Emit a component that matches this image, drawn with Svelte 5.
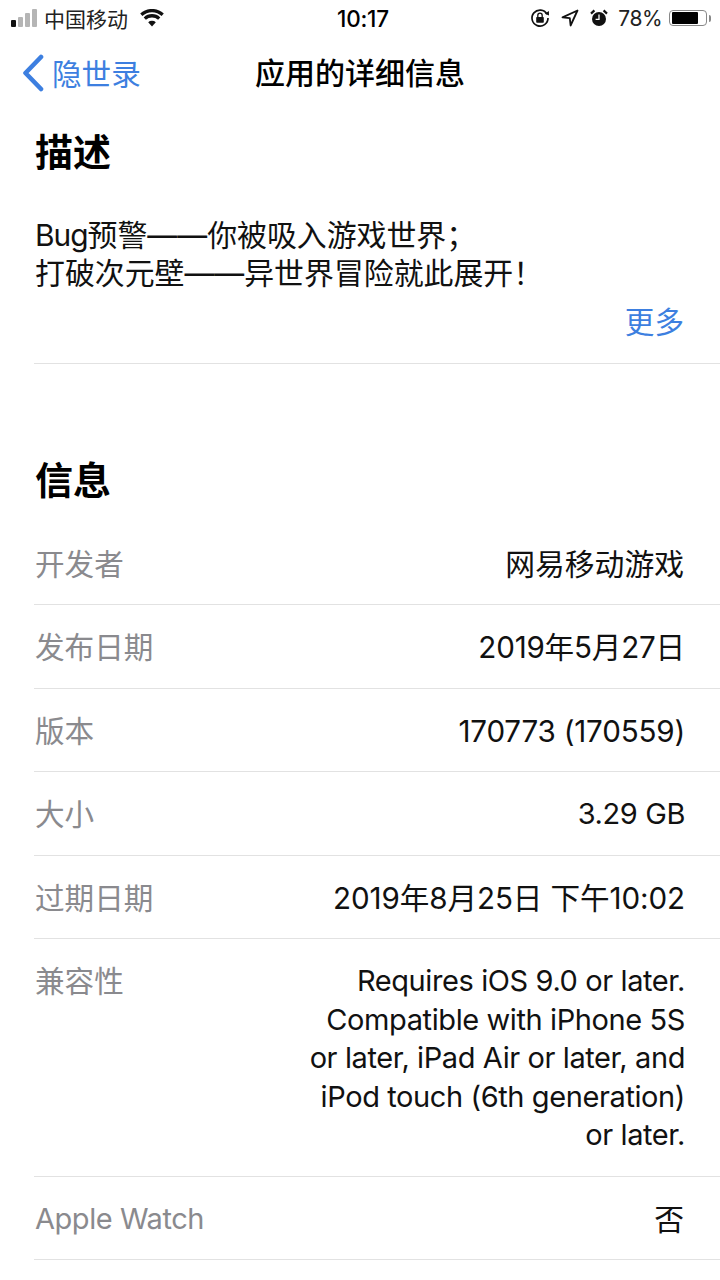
<script>
	// Rows of the info table; kind picks the tracking that suits the text
	const rows = [
		{ label: '开发者', value: ['网易移动游戏'], kind: 'cjk' },
		{ label: '发布日期', value: ['2019年5月27日'], kind: 'num' },
		{ label: '版本', value: ['170773 (170559)'], kind: 'num' },
		{ label: '大小', value: ['3.29 GB'], kind: 'text' },
		{ label: '过期日期', value: ['2019年8月25日 下午10:02'], kind: 'wide' },
		{
			label: '兼容性',
			value: [
				'Requires iOS 9.0 or later.',
				'Compatible with iPhone 5S',
				'or later, iPad Air or later, and',
				'iPod touch (6th generation)',
				'or later.'
			],
			kind: 'text'
		},
		{ label: 'Apple Watch', value: ['否'], kind: 'cjk', labelText: true }
	];
</script>

<div class="page">
	<header class="status">
		<div class="status-left">
			<div class="signal">
				<i class="on"></i><i></i><i></i><i></i>
			</div>
			<span class="carrier">中国移动</span>
			<svg class="wifi" viewBox="0 0 24 18" width="24" height="18">
				<path d="M12 17.5 L8.2 13.2 A5.6 5.6 0 0 1 15.8 13.2 Z" />
				<path d="M5.9 10.8 L3.7 8.4 A12 12 0 0 1 20.3 8.4 L18.1 10.8 A9 9 0 0 0 5.9 10.8 Z" />
				<path d="M2.4 7 L0.2 4.6 A17.2 17.2 0 0 1 23.8 4.6 L21.6 7 A14 14 0 0 0 2.4 7 Z" />
			</svg>
		</div>
		<span class="time">10:17</span>
		<div class="status-right">
			<svg class="lock" viewBox="0 0 20 20" width="20" height="20">
				<path d="M17 6.2 A8 8 0 1 0 18 10" fill="none" stroke="#111" stroke-width="1.7" />
				<path d="M14.8 5.8 L19 7.4 L18.9 3 Z" fill="#111" />
				<rect x="6.2" y="9" width="7.6" height="5.8" rx="0.8" fill="#111" />
				<path d="M7.8 9 V7.4 A2.2 2.2 0 0 1 12.2 7.4 V9" fill="none" stroke="#111" stroke-width="1.3" />
			</svg>
			<svg class="arrow" viewBox="0 0 18 18" width="18" height="18">
				<path d="M16.5 1.5 L1.5 8.4 L8.8 9.2 L9.6 16.5 Z" fill="none" stroke="#111" stroke-width="1.8" stroke-linejoin="round" />
			</svg>
			<svg class="alarm" viewBox="0 0 18 18" width="18" height="18">
				<circle cx="9" cy="10" r="7" fill="#111" />
				<path d="M1 4.6 L4.4 1.4 M17 4.6 L13.6 1.4" stroke="#111" stroke-width="2.2" />
				<path d="M9 5.6 V10.4 H5.6" fill="none" stroke="#fff" stroke-width="1.3" />
			</svg>
			<span class="percent">78%</span>
			<div class="battery">
				<div class="battery-body"><div class="battery-fill"></div></div>
				<div class="battery-tip"></div>
			</div>
		</div>
	</header>

	<nav class="nav">
		<div class="back">
			<svg viewBox="0 0 24 38" width="24" height="38">
				<path d="M20 3 L4.5 19 L20 35" fill="none" stroke="#3d7fe0" stroke-width="4.6" stroke-linecap="round" stroke-linejoin="round" />
			</svg>
			<span>隐世录</span>
		</div>
		<div class="title">应用的详细信息</div>
	</nav>

	<section class="description">
		<h2>描述</h2>
		<p><span class="bug">Bug</span>预警——你被吸入游戏世界；<br />打破次元壁——异世界冒险就此展开！</p>
		<div class="more">更多</div>
	</section>

	<section class="info">
		<h2>信息</h2>
		{#each rows as row}
			<div class="row">
				<div class="label" class:latin={row.labelText}>{row.label}</div>
				<div class="value {row.kind}">
					{#each row.value as line}
						<div>{line}</div>
					{/each}
				</div>
			</div>
		{/each}
	</section>
</div>

<style>
	:global(body) {
		margin: 0;
		background: #fff;
	}
	.page {
		width: 720px;
		height: 1280px;
		overflow: hidden;
		background: #fff;
		color: #000;
		font-family: Inter, 'Noto Sans CJK SC', sans-serif;
	}
	.status {
		height: 36px;
		display: flex;
		align-items: center;
		justify-content: space-between;
		padding: 0 9px 0 11px;
		position: relative;
	}
	.status-left {
		display: flex;
		align-items: center;
	}
	.signal {
		display: flex;
		align-items: flex-end;
		gap: 2px;
		width: 28px;
	}
	.signal i {
		display: block;
		width: 5px;
		border-radius: 1px;
		background: #b5b5b5;
	}
	.signal i:nth-child(1) {
		height: 7px;
	}
	.signal i:nth-child(2) {
		height: 10px;
	}
	.signal i:nth-child(3) {
		height: 14px;
	}
	.signal i:nth-child(4) {
		height: 18px;
	}
	.signal i.on {
		background: #111;
	}
	.carrier {
		font-size: 21px;
		margin-left: 5px;
		color: #222;
	}
	.wifi {
		margin-left: 12px;
		fill: #111;
	}
	.time {
		position: absolute;
		left: 337px;
		font-size: 22.5px;
		font-weight: 500;
		letter-spacing: -0.2px;
	}
	.status-right {
		display: flex;
		align-items: center;
	}
	.lock {
		margin-right: 11px;
	}
	.arrow {
		margin-right: 11px;
	}
	.alarm {
		margin-right: 10px;
	}
	.percent {
		font-size: 21px;
		letter-spacing: -0.5px;
		color: #222;
		margin-right: 7px;
	}
	.battery {
		display: flex;
		align-items: center;
	}
	.battery-body {
		width: 32px;
		height: 12px;
		border: 1.5px solid #888;
		border-radius: 4px;
		padding: 1px 2px;
		box-sizing: content-box;
	}
	.battery-fill {
		width: 26px;
		height: 100%;
		background: #000;
		border-radius: 1px;
	}
	.battery-tip {
		width: 2px;
		height: 7px;
		margin-left: 2px;
		background: #888;
		border-radius: 0 2px 2px 0;
	}
	.nav {
		height: 74px;
		position: relative;
		display: flex;
		align-items: center;
		justify-content: center;
		padding-bottom: 4px;
		box-sizing: border-box;
	}
	.back {
		position: absolute;
		left: 21px;
		top: 15px;
		display: flex;
		align-items: center;
		gap: 7px;
		color: #3d7fe0;
		font-size: 29.6px;
	}
	.title {
		font-size: 30px;
		font-weight: 500;
	}
	h2 {
		margin: 0;
		font-size: 38px;
		line-height: 50px;
		font-weight: 700;
	}
	.description {
		margin-left: 34px;
		padding: 17px 36px 22px 1px;
		border-bottom: 1px solid #e2e2e2;
	}
	.description p {
		margin: 39px -30px 0 0;
		font-size: 29.9px;
		line-height: 38px;
		color: #111;
	}
	.bug {
		letter-spacing: -1px;
	}
	.more {
		text-align: right;
		color: #3d7fe0;
		font-size: 29.6px;
		line-height: 38px;
		margin-top: 11px;
	}
	.info {
		margin-top: 91px;
		margin-left: 34px;
	}
	.info h2 {
		padding-left: 1px;
		margin-bottom: 17px;
	}
	.row {
		display: flex;
		justify-content: space-between;
		padding: 23px 35px 21px 1px;
		border-bottom: 1px solid #e2e2e2;
		font-size: 29.6px;
		line-height: 38.45px;
	}
	.label {
		color: #8a8a8e;
	}
	.label.latin {
		font-size: 29px;
		letter-spacing: -0.45px;
	}
	.value {
		text-align: right;
		color: #111;
	}
	.value.num {
		letter-spacing: -0.2px;
	}
	.value.wide {
		letter-spacing: -0.1px;
	}
	.value.cjk {
		font-size: 29.8px;
		padding-right: 1px;
	}
	.value.text {
		font-size: 29px;
		letter-spacing: -0.4px;
	}
</style>
